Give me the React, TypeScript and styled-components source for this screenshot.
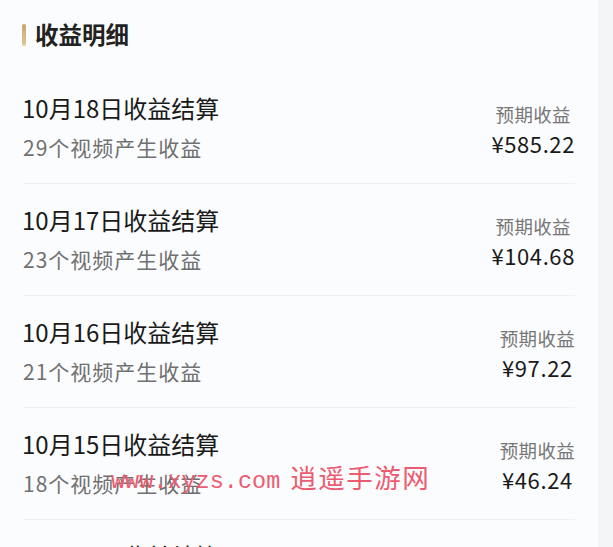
import {FC} from 'react'
import styled, {createGlobalStyle} from 'styled-components'

interface IIncomeItem {
  date: string
  videos: number
  amount: string
}

const items: IIncomeItem[] = [
  {date: '10月18日', videos: 29, amount: '585.22'},
  {date: '10月17日', videos: 23, amount: '104.68'},
  {date: '10月16日', videos: 21, amount: '97.22'},
  {date: '10月15日', videos: 18, amount: '46.24'},
  {date: '10月14日', videos: 16, amount: '38.10'}
]

const App: FC = () => {
  return (
    <>
      <GlobalStyle />
      <Page>
        <Panel>
          <Header>
            <HeaderMark />
            <HeaderText>收益明细</HeaderText>
          </Header>
          {items.map(item => (
            <Row key={item.date}>
              <RowInfo>
                <RowTitle>{item.date}收益结算</RowTitle>
                <RowSub>{item.videos}个视频产生收益</RowSub>
              </RowInfo>
              <RowAmount>
                <AmountLabel>预期收益</AmountLabel>
                <AmountValue>¥{item.amount}</AmountValue>
              </RowAmount>
            </Row>
          ))}
          <Watermark>
            <WatermarkDomain>www.xyzs.com</WatermarkDomain>
            <WatermarkName>逍遥手游网</WatermarkName>
          </Watermark>
        </Panel>
        <Edge />
      </Page>
    </>
  )
}

const GlobalStyle = createGlobalStyle`
  html, body {
    margin: 0;
    padding: 0;
    background: #f5f6f8;
  }
  body {
    font-family: "Noto Sans CJK SC", "Noto Sans", sans-serif;
  }
`

const Page = styled.div`
  width: 613px;
  height: 547px;
  overflow: hidden;

  display: flex;
`

const Panel = styled.div`
  position: relative;
  width: 598px;
  flex-shrink: 0;
  padding: 0 23px;
  box-sizing: border-box;

  background: #fbfcfd;
`

const Edge = styled.div`
  flex: 1;
  background: #f4f5f7;
`

const Header = styled.div`
  height: 72px;
  padding-top: 20px;
  box-sizing: border-box;

  display: flex;
  align-items: flex-start;
  gap: 9px;
`

const HeaderMark = styled.div`
  width: 4px;
  height: 22px;
  margin-top: 4px;
  margin-left: -1px;
  border-radius: 2px;

  background: linear-gradient(180deg, #caa46a, #e3c99a);
`

const HeaderText = styled.h1`
  margin: 0;
  font-size: 23.5px;
  line-height: 28px;
  font-weight: 700;
  color: #222;
`

const Row = styled.div`
  height: 112px;
  padding: 22px 0 24px;
  box-sizing: border-box;
  border-bottom: 1px solid #f0f1f4;

  display: flex;
  align-items: center;
  justify-content: space-between;
`

const RowInfo = styled.div`
  display: flex;
  flex-direction: column;
  gap: 12px;
`

const RowTitle = styled.div`
  margin-left: -1px;
  font-size: 24px;
  line-height: 28px;
  color: #1a1a1a;
`

const RowSub = styled.div`
  font-size: 21px;
  line-height: 26px;
  letter-spacing: 1px;
  color: #707070;
`

const RowAmount = styled.div`
  margin-top: 5px;

  display: flex;
  flex-direction: column;
  align-items: center;
  gap: 3px;
`

const AmountLabel = styled.div`
  font-size: 18.5px;
  line-height: 24px;
  letter-spacing: 0.3px;
  color: #777;
`

const AmountValue = styled.div`
  font-size: 22px;
  line-height: 28px;
  letter-spacing: 0.6px;
  color: #1a1a1a;
`

const Watermark = styled.div`
  position: absolute;
  left: 111px;
  top: 462px;

  display: flex;
  align-items: baseline;
  gap: 10px;

  color: #ec5b70;
  pointer-events: none;
`

const WatermarkDomain = styled.span`
  font-family: "Liberation Mono", monospace;
  font-size: 23.5px;
  line-height: 30px;
`

const WatermarkName = styled.span`
  font-family: "Noto Sans CJK SC", sans-serif;
  font-size: 26.5px;
  line-height: 30px;
  letter-spacing: 1.5px;
`

export default App
